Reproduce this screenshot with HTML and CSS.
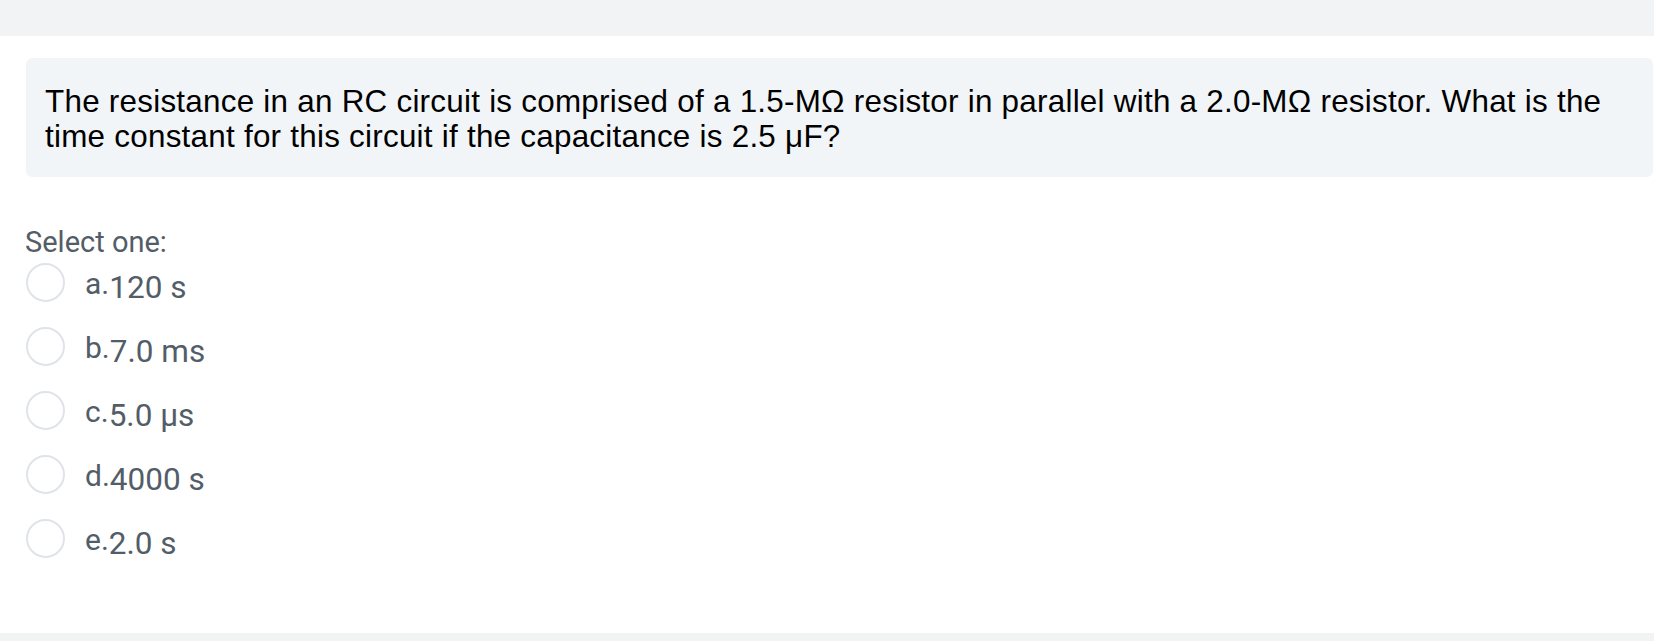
FILE: index.html
```html
<!DOCTYPE html>
<html lang="en">
<head>
<meta charset="utf-8">
<title>Question</title>
<link rel="stylesheet" href="styles.css">
</head>
<body>
<div class="topbar"></div>
<main class="que">
  <div class="formulation">
    <div class="qtext">The resistance in an RC circuit is comprised of a 1.5-MΩ resistor in parallel with a 2.0-MΩ resistor. What is the time constant for this circuit if the capacitance is 2.5 μF?</div>
  </div>
  <div class="ablock">
    <div class="prompt">Select one:</div>
    <div class="answer">
      <div class="option"><span class="radio"></span><div class="label"><span class="num">a.</span><span class="txt">120 s</span></div></div>
      <div class="option"><span class="radio"></span><div class="label"><span class="num">b.</span><span class="txt">7.0 ms</span></div></div>
      <div class="option"><span class="radio"></span><div class="label"><span class="num">c.</span><span class="txt">5.0 μs</span></div></div>
      <div class="option"><span class="radio"></span><div class="label"><span class="num">d.</span><span class="txt">4000 s</span></div></div>
      <div class="option"><span class="radio"></span><div class="label"><span class="num">e.</span><span class="txt">2.0 s</span></div></div>
    </div>
  </div>
</main>
<div class="bottombar"></div>
</body>
</html>
```

FILE: styles.css
```css
html, body {
  margin: 0;
  padding: 0;
  background: #ffffff;
}
body {
  width: 1654px;
  height: 641px;
  overflow: hidden;
  display: flex;
  flex-direction: column;
}
.topbar {
  height: 36px;
  background: #f2f3f5;
  flex: none;
}
.que {
  flex: 1;
  padding-left: 23px;
  padding-right: 1px;
}
.formulation {
  margin-top: 22px;
  margin-left: 3px;
  background: #f2f5f7;
  border-radius: 6px;
  padding: 26px 40px 23px 19px;
}
.qtext {
  font-family: "Liberation Sans", Arial, sans-serif;
  font-size: 31.4px;
  letter-spacing: 0.25px;
  line-height: 35px;
  color: #000000;
}
.ablock {
  margin-top: 48px;
  padding-left: 1px;
  font-family: Roboto, "Noto Sans", sans-serif;
  color: #535d68;
}
.prompt {
  font-size: 29px;
  line-height: 34px;
  margin-left: 1px;
}
.answer {
  margin-top: 4px;
  display: flex;
  flex-direction: column;
}
.option {
  height: 64px;
  display: flex;
  align-items: flex-start;
}
.radio {
  flex: none;
  box-sizing: border-box;
  width: 39px;
  height: 39px;
  margin-left: 2px;
  border: 2px solid #e0e4e8;
  border-radius: 50%;
  background: #ffffff;
}
.label {
  margin-left: 20px;
  display: flex;
  align-items: flex-start;
}
.num {
  font-size: 30px;
  line-height: 38px;
  padding-top: 2px;
}
.txt {
  font-size: 31.5px;
  line-height: 38px;
  padding-top: 6px;
}
.bottombar {
  height: 8px;
  background: #f2f3f3;
  flex: none;
}
```
